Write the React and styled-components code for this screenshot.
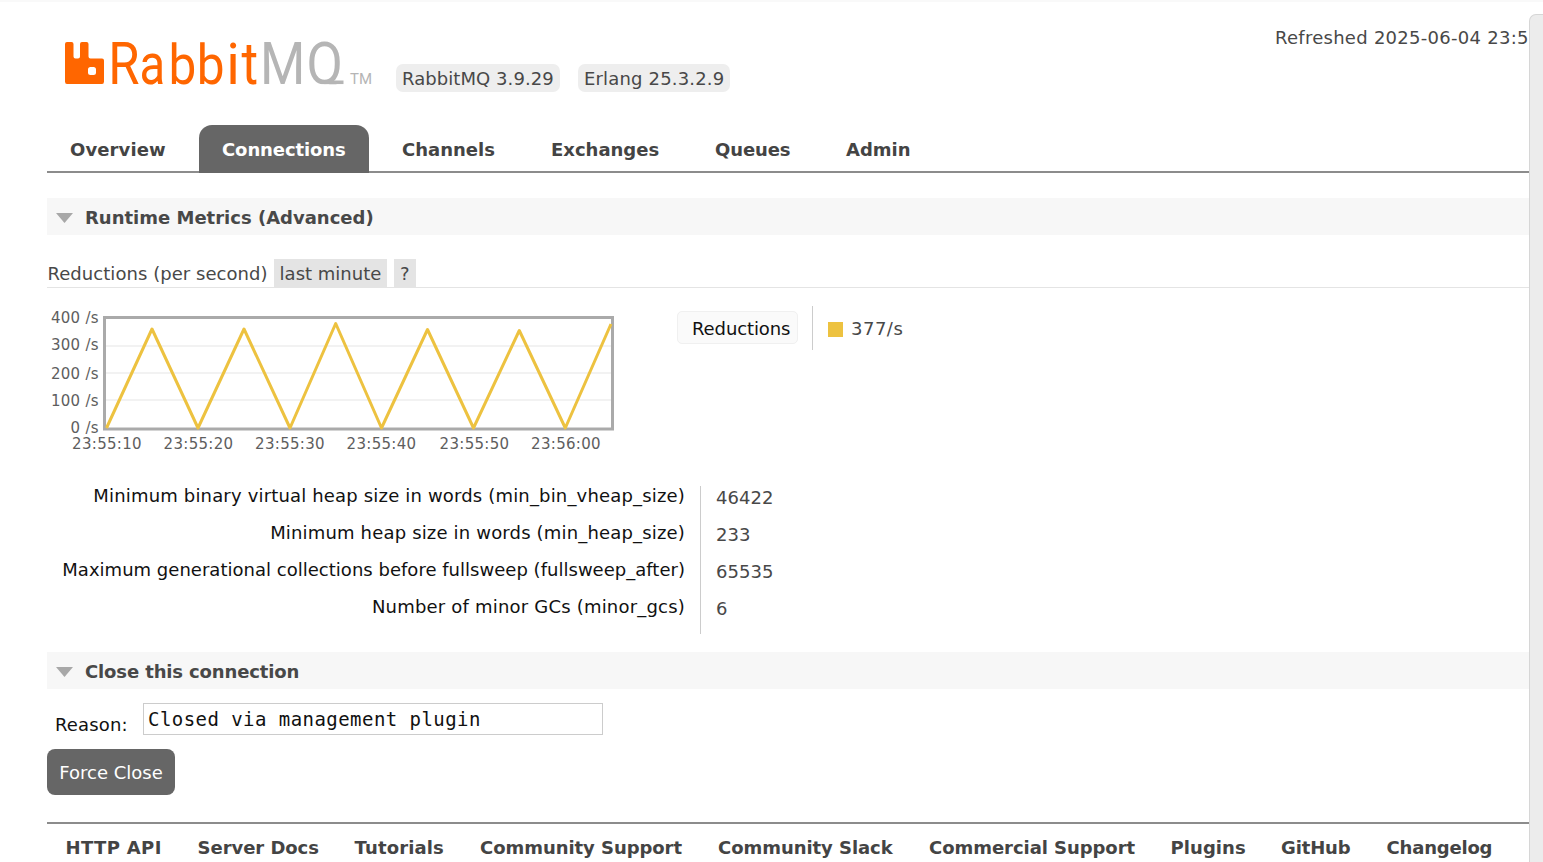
import React from "react";
import styled, { createGlobalStyle } from "styled-components";

const GlobalStyle = createGlobalStyle`
  * { box-sizing: border-box; }
  html, body { margin: 0; background: #fff; overflow: hidden; }
  body { font: 18px/22px "DejaVu Sans", Verdana, sans-serif; color: #484848; }
`;

const Window = styled.div`
  display: flex;
  width: 1543px;
  height: 862px;
  overflow: hidden;
  border-top: 2px solid #f9f9f9;
`;

const Page = styled.div`
  flex: 0 0 1529px;
  height: 860px;
  padding-left: 47px;
  overflow: hidden;
  white-space: nowrap;
`;

const SidePanel = styled.div`
  flex: 1;
  margin-top: 12px;
  background: #ececec;
  border: 1px solid #d6d6d6;
  border-width: 1px 0 0 1px;
  border-top-left-radius: 7px;
`;

const Text = styled.span`
  letter-spacing: ${(p) => p.$track || 0}px;
`;

const Header = styled.header`
  display: flex;
  height: 123px;
  align-items: flex-start;
`;

const Logo = styled.svg`
  flex: none;
  width: 349px;
  height: 100px;
  font-family: Roboto, sans-serif;
`;

const Badge = styled.span`
  width: ${(p) => p.$width}px;
  height: 28px;
  margin: 62px 18px 0 0;
  padding: 4px 0 0 6px;
  border-radius: 7px;
  background: #eeeeee;
`;

const Refreshed = styled.div`
  margin: 25px 0 0 auto;
  width: 254px;
`;

const Nav = styled.nav`
  display: flex;
  height: 48px;
  border-bottom: 2px solid #8c8c8c;
  font-weight: bold;
`;

const Tab = styled.a`
  width: ${(p) => p.$width}px;
  height: 48px;
  margin-right: ${(p) => p.$gap}px;
  padding: 14px 0 0 23px;
  border-radius: 13px 13px 0 0;
  color: ${(p) => (p.$active ? "#fff" : "#444")};
  background: ${(p) => (p.$active ? "#666" : "transparent")};
`;

const SectionTitle = styled.h2`
  display: flex;
  align-items: flex-start;
  height: 37px;
  margin: ${(p) => p.$top}px 0 0;
  padding: 9px 0 0 9px;
  background: #f7f7f7;
  font-size: 18px;
  font-weight: bold;
  color: #484848;
`;

const Arrow = styled.span`
  width: 17px;
  height: 10px;
  margin: 6px 12px 0 0;
  background: #a8a8a8;
  clip-path: polygon(0 0, 100% 0, 50% 100%);
`;

const ChartHeading = styled.div`
  display: flex;
  height: 29px;
  margin-top: 24px;
  border-bottom: 1px solid #e4e4e4;
`;

const HeadingLabel = styled.span`
  width: 227px;
  padding: 4px 0 0 0.5px;
`;

const Option = styled.span`
  width: ${(p) => p.$width}px;
  margin-right: 7px;
  padding: 4px 0 0 ${(p) => p.$pad}px;
  background: #e4e4e4;
`;

const ChartRow = styled.div`
  display: flex;
  height: 181px;
  padding-top: 18px;
`;

const Chart = styled.svg`
  flex: none;
  width: 630px;
  height: 160px;
  font-size: 15px;
  letter-spacing: 0.3px;
  fill: #5e5e5e;
`;

const SeriesButton = styled.div`
  width: 121px;
  height: 33px;
  margin-top: 5px;
  padding: 6px 0 0 14px;
  border: 1px solid #f0f0f0;
  border-radius: 5px;
  background: #fafafa;
  color: #111;
`;

const SeriesValue = styled.div`
  display: flex;
  height: 44px;
  margin-left: 14px;
  padding: 12px 0 0 15px;
  border-left: 1px solid #ccc;
`;

const Swatch = styled.span`
  width: 15px;
  height: 15px;
  margin: 4px 8px 0 0;
  background: #edc240;
`;

const Facts = styled.div`
  display: grid;
  grid-template-columns: 653px 1fr;
  height: 148px;
  margin-top: 17px;
`;

const FactLabels = styled.div`
  display: flex;
  flex-direction: column;
  align-items: flex-end;
  padding-right: 15px;
  line-height: 37px;
  color: #111;
  margin-top: -9px;
`;

const FactValues = styled.div`
  display: flex;
  flex-direction: column;
  padding-left: 15px;
  border-left: 1px solid #ccc;
`;

const FactValue = styled.span`
  height: 37px;
  line-height: 24px;
  letter-spacing: 0.05px;
`;

const Form = styled.div`
  display: flex;
  height: 60px;
  padding: 14px 0 0 8px;
  color: #111;
`;

const FieldLabel = styled.label`
  width: 88px;
  padding-top: 11px;
`;

const Field = styled.div`
  width: 460px;
  height: 32px;
  padding: 4px 4px 0;
  border: 1px solid #ccc;
  font: 19px/22px "DejaVu Sans Mono", monospace;
  letter-spacing: 0.45px;
`;

const Button = styled.button`
  display: block;
  width: 128px;
  height: 46px;
  padding: 1px 0 0;
  border: 0;
  border-radius: 8px;
  background: #666;
  color: #fff;
  font: inherit;
`;

const Footer = styled.footer`
  display: flex;
  margin-top: 27px;
  padding: 13px 0 0 18.6px;
  border-top: 2px solid #8c8c8c;
  font-weight: bold;
  color: #444;
`;

const FooterLink = styled.a`
  flex: none;
  width: ${(p) => p.$width}px;
`;

const tabs = [
  ["Overview", 142, 10, 0.11],
  ["Connections", 170, 10, -0.1],
  ["Channels", 139, 10, 0],
  ["Exchanges", 154, 10, 0],
  ["Queues", 121, 10, -0.1],
  ["Admin", 110, 0, 0],
];

const facts = [
  ["Minimum binary virtual heap size in words (min_bin_vheap_size)", "46422", 0.17],
  ["Minimum heap size in words (min_heap_size)", "233", 0.17],
  ["Maximum generational collections before fullsweep (fullsweep_after)", "65535", 0.02],
  ["Number of minor GCs (minor_gcs)", "6", 0.2],
];

const links = [
  ["HTTP API", 132, 0.35],
  ["Server Docs", 157, -0.05],
  ["Tutorials", 125.5, 0.12],
  ["Community Support", 238, -0.06],
  ["Community Slack", 211, -0.06],
  ["Commercial Support", 241.5, -0.06],
  ["Plugins", 110.5, 0.05],
  ["GitHub", 105.5, -0.15],
  ["Changelog", 110, -0.2],
];

const glyphs = [
  ["R", 108.3, 0.86, 1],
  ["a", 139.5, 0.8, 0.98],
  ["b", 168.4, 0.84, 0.955],
  ["b", 196.8, 0.84, 0.955],
  ["i", 226.3, 0.95, 0.96],
  ["t", 241.5, 0.86, 1],
];

const yTicks = [["400 /s", 323], ["300 /s", 350], ["200 /s", 379], ["100 /s", 406], ["0 /s", 433]];
const xTicks = [["23:55:10", 107], ["23:55:20", 198.5], ["23:55:30", 290], ["23:55:40", 381.5], ["23:55:50", 474.5], ["23:56:00", 566]];

function RabbitLogo() {
  return (
    <Logo viewBox="47 2 349 100">
      <path
        fill="#f60"
        d="M67 42h4.500q2 0 2 2v12.500q0 2 2 2h2.500q2 0 2-2v-12.500q0-2 2-2h4.500q2 0 2 2v12.500q0 2 2 2h11.500q2 0 2 2v21q0 2.500-2 2.500h-35q-2 0-2-2.500v-37.500q0-2 2-2zM90.500 67q-2.500 0-2.500 2.500v3q0 2.500 2.500 2.500h3q2.500 0 2.500-2.500v-3q0-2.500-2.500-2.500z"
        fillRule="evenodd"
      />
      <g fill="#f60" fontSize="59">
        {glyphs.map(([g, x, sx, sy]) => (
          <text key={x} transform={`translate(${x} 84) scale(${sx} ${sy})`}>{g}</text>
        ))}
      </g>
      <clipPath id="baseline">
        <path d="M250 30H350V84.300H250z" />
      </clipPath>
      <g fill="#b5b5b5" fontSize="59" clipPath="url(#baseline)">
        <text transform="translate(260 84) scale(.88 1)">M</text>
        <text transform="translate(306.500 84) scale(.9 1)">Q</text>
        <path d="M324 80.500H343.500V84.300H324z" />
      </g>
      <text x="350" y="84" fontSize="15.500" fill="#b5b5b5" textLength="22" lengthAdjust="spacingAndGlyphs">TM</text>
    </Logo>
  );
}

function ReductionsChart() {
  return (
    <Chart viewBox="47 306 630 160">
      <path d="M106 346H611M106 373H611M106 400H611" stroke="#eeeeee" strokeWidth="1.500" />
      <rect x="104.500" y="317.500" width="508" height="111.500" fill="none" stroke="#aaa" strokeWidth="3" />
      <path
        d="M106.500 428L152 329L198 428L244 329L290 428L335.700 323.500L381.500 428L427.500 329.500L473.500 428L519.300 330.500L565.300 428L611 324"
        fill="none"
        stroke="#edc240"
        strokeWidth="3"
        strokeLinejoin="round"
      />
      {yTicks.map(([t, y]) => (
        <text key={t} x="99" y={y} textAnchor="end">{t}</text>
      ))}
      {xTicks.map(([t, x]) => (
        <text key={t} x={x} y="449" textAnchor="middle">{t}</text>
      ))}
    </Chart>
  );
}

export default function App() {
  return (
    <Window>
      <GlobalStyle />
      <Page>
        <Header>
          <RabbitLogo />
          <Badge $width={164}><Text $track={0.07}>RabbitMQ 3.9.29</Text></Badge>
          <Badge $width={152}><Text $track={0.17}>Erlang 25.3.2.9</Text></Badge>
          <Refreshed><Text $track={0.27}>Refreshed 2025-06-04 23:5</Text></Refreshed>
        </Header>
        <Nav>
          {tabs.map(([label, width, gap, track]) => (
            <Tab key={label} $width={width} $gap={gap} $active={label === "Connections"}>
              <Text $track={track}>{label}</Text>
            </Tab>
          ))}
        </Nav>

        <SectionTitle $top={25}><Arrow />Runtime Metrics (Advanced)</SectionTitle>
        <ChartHeading>
          <HeadingLabel><Text $track={0.05}>Reductions (per second)</Text></HeadingLabel>
          <Option $width={113} $pad={5.6}><Text>last minute</Text></Option>
          <Option $width={22} $pad={6}>?</Option>
        </ChartHeading>
        <ChartRow>
          <ReductionsChart />
          <SeriesButton><Text $track={-0.1}>Reductions</Text></SeriesButton>
          <SeriesValue><Swatch /><Text $track={0.5}>377/s</Text></SeriesValue>
        </ChartRow>
        <Facts>
          <FactLabels>
            {facts.map(([label, , track]) => <Text key={label} $track={track}>{label}</Text>)}
          </FactLabels>
          <FactValues>
            {facts.map(([, value]) => <FactValue key={value}>{value}</FactValue>)}
          </FactValues>
        </Facts>

        <SectionTitle $top={18}><Arrow /><Text $track={-0.13}>Close this connection</Text></SectionTitle>
        <Form>
          <FieldLabel><Text $track={0.15}>Reason:</Text></FieldLabel>
          <Field>Closed via management plugin</Field>
        </Form>
        <Button>Force Close</Button>
        <Footer>
          {links.map(([label, width, track]) => (
            <FooterLink key={label} $width={width}><Text $track={track}>{label}</Text></FooterLink>
          ))}
        </Footer>
      </Page>
      <SidePanel />
    </Window>
  );
}
